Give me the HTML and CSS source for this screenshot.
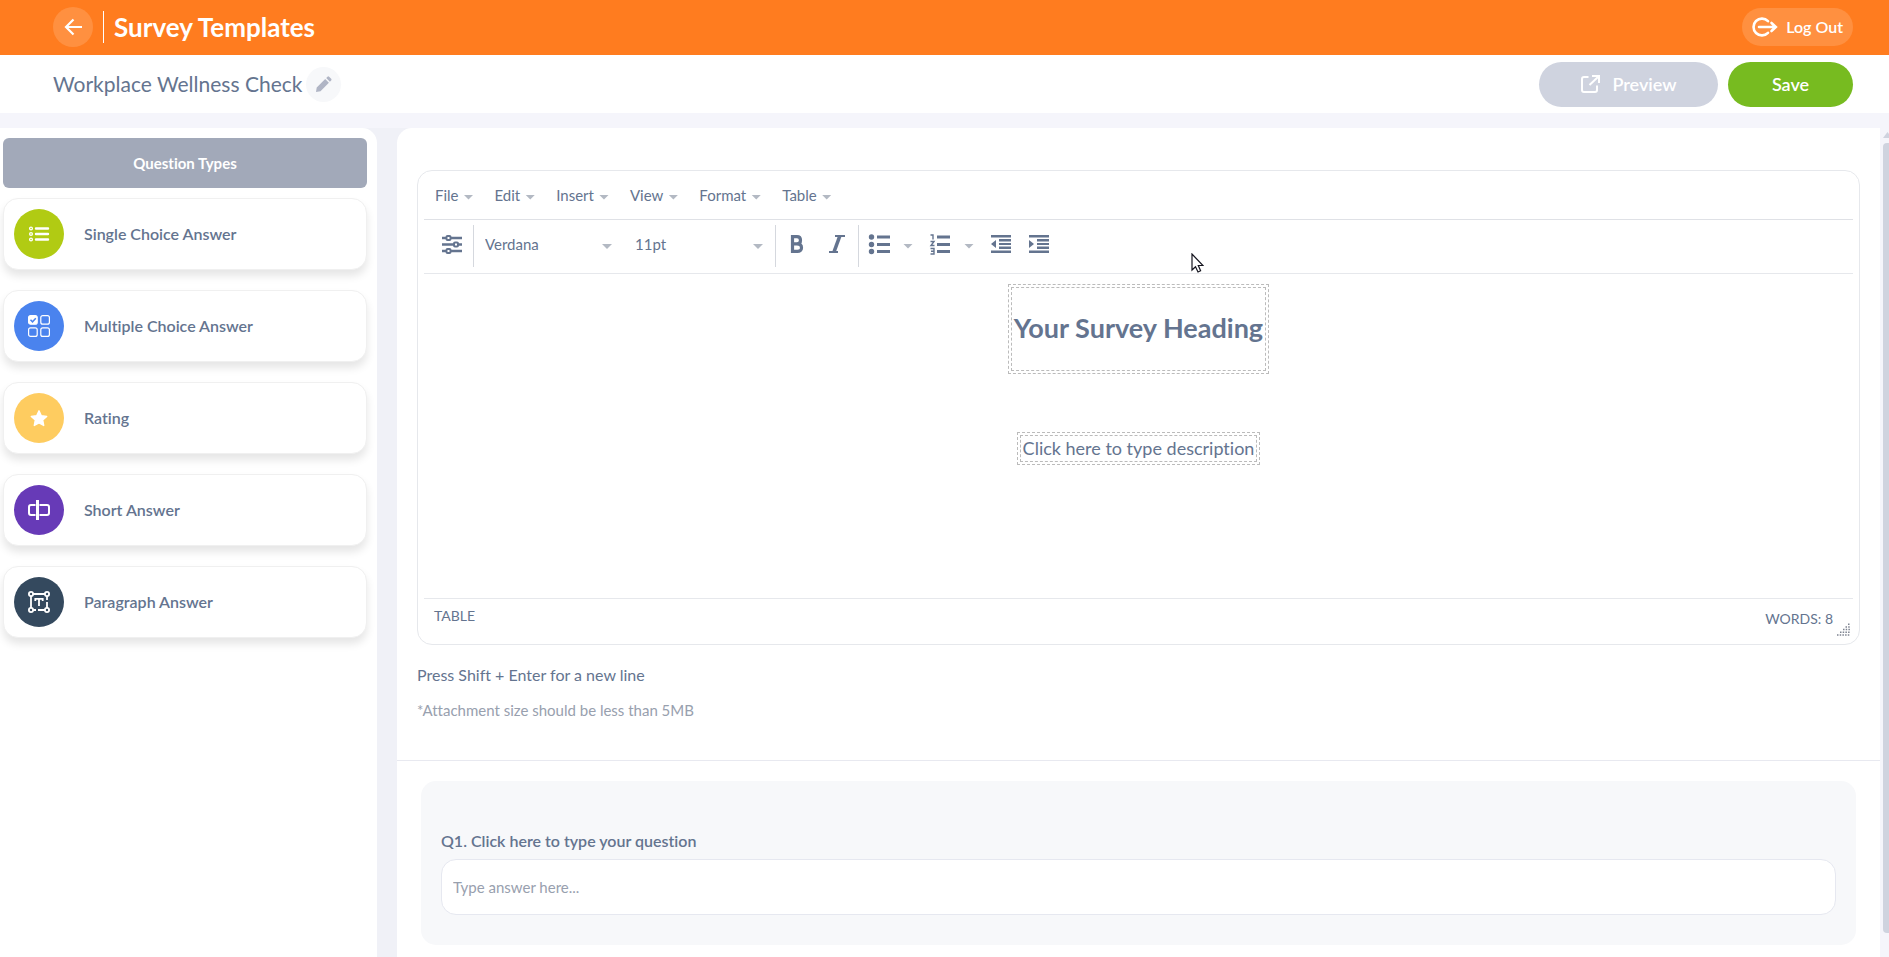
FILE: index.html
```html
<!DOCTYPE html>
<html lang="en">
<head>
<meta charset="utf-8">
<title>Survey Templates</title>
<link rel="stylesheet" href="styles.css">
</head>
<body>
<header class="topbar">
  <button class="back" aria-label="Back"><svg width="20" height="20" viewBox="0 0 20 20" fill="none" stroke="#fff" stroke-width="2.2"><path d="M19 10H3M10.5 2.5 3 10l7.500 7.500"/></svg></button>
  <h1 class="topbar-title">Survey Templates</h1>
  <button class="logout"><svg width="28" height="20" viewBox="0 0 28 20" fill="none" stroke="#fff" stroke-width="2.600" stroke-linecap="round"><path d="M18 4.200A8.400 8.400 0 1 0 18 15.800M9 10h16M21.500 6l4.300 4-4.300 4"/></svg>Log Out</button>
</header>
<div class="subbar">
  <h2 class="survey-name">Workplace Wellness Check</h2>
  <button class="edit" aria-label="Rename survey"><svg width="17" height="17" viewBox="0 0 17 17" fill="#b0b5c5"><path d="M1 16l.7-4.600L10.200 3l3.700 3.700L5.500 15.200zM11.200 2l1.300-1.300q.8-.7 1.600 0l2.100 2.100q.7.8 0 1.600L14.900 5.700z"/></svg></button>
  <button class="pill preview"><svg width="20" height="20" viewBox="0 0 20 20" fill="none" stroke="#fff" stroke-width="2"><path d="M8.500 3H4Q2 3 2 5v11q0 2 2 2h11q2 0 2-2v-4.500M12 2h7v7M18.500 2.500 9.500 11"/></svg>Preview</button>
  <button class="pill save">Save</button>
</div>
<div class="workspace">
  <aside class="sidebar">
    <h3 class="types-title">Question Types</h3>
    <ul class="types">
      <li><button class="type"><span class="disc lime"><svg width="22" height="18" viewBox="0 0 22 18" fill="none" stroke="#fff"><g stroke-width="1.300"><circle cx="3" cy="3.500" r="1.400"/><circle cx="3" cy="9" r="1.400"/><circle cx="3" cy="14.500" r="1.400"/></g><path stroke-width="2.400" stroke-linecap="round" d="M8 3.500h12M8 9h12M8 14.500h12"/></svg></span>Single Choice Answer</button></li>
      <li><button class="type"><span class="disc blue"><svg width="22" height="22" viewBox="0 0 22 22" fill="none" stroke="#fff" stroke-width="1.200"><rect x=".6" y=".6" width="8.600" height="8.600" rx="2" fill="#fff"/><rect x="12.800" y=".6" width="8.600" height="8.600" rx="2"/><rect x=".6" y="12.800" width="8.600" height="8.600" rx="2"/><rect x="12.800" y="12.800" width="8.600" height="8.600" rx="2"/><path stroke="#4a83ee" stroke-width="1.500" d="M2.500 4.800l2 2 3.300-3.500"/></svg></span>Multiple Choice Answer</button></li>
      <li><button class="type"><span class="disc amber"><svg width="20" height="20" viewBox="0 0 20 20" fill="#fff" stroke="#fff" stroke-width="1.400" stroke-linejoin="round"><path d="M10 2.800l2.300 4.900 5.400.7-4 3.700 1 5.400-4.700-2.600-4.700 2.600 1-5.400-4-3.700 5.400-.7z"/></svg></span>Rating</button></li>
      <li><button class="type"><span class="disc purple"><svg width="22" height="20" viewBox="0 0 22 20" fill="none" stroke="#fff"><path stroke-width="2" d="M7.500 5H3Q1 5 1 7v6q0 2 2 2h4.500M11.500 5H19q2 0 2 2v6q0 2-2 2h-7.500"/><path stroke-width="3" d="M9.500 0v20"/></svg></span>Short Answer</button></li>
      <li><button class="type"><span class="disc navy"><svg width="22" height="22" viewBox="0 0 22 22" fill="none" stroke="#fff" stroke-width="1.800"><circle cx="3" cy="3" r="2.100"/><circle cx="19" cy="3" r="2.100"/><circle cx="3" cy="19" r="2.100"/><circle cx="19" cy="19" r="2.100"/><path d="M5 3h12M3 5v12M19 5v4M19 11v6M5 19h3M10 19h7M7.300 10V7.800h7.400V10M11 8v7"/></svg></span>Paragraph Answer</button></li>
    </ul>
  </aside>
  <main class="main">
    <section class="intro">
      <div class="editor">
        <nav class="menus">
          <button class="menu">File<i class="caret"></i></button>
          <button class="menu">Edit<i class="caret"></i></button>
          <button class="menu">Insert<i class="caret"></i></button>
          <button class="menu">View<i class="caret"></i></button>
          <button class="menu">Format<i class="caret"></i></button>
          <button class="menu">Table<i class="caret"></i></button>
        </nav>
        <div class="tools">
          <button class="tool options" aria-label="Options"><svg width="22" height="20" viewBox="0 0 22 20" fill="#fff" stroke="#64748f" stroke-width="2"><path stroke-width="2.600" d="M1 4h20M1 10.500h20M1 17h20"/><rect x="5.500" y="2" width="4" height="4" rx="1"/><rect x="13" y="8.500" width="4" height="4" rx="1"/><rect x="5.500" y="15" width="4" height="4" rx="1"/></svg></button>
          <label class="picker"><select aria-label="Font"><option>Verdana</option></select><i class="caret"></i></label>
          <label class="picker size"><select aria-label="Font size"><option>11pt</option></select><i class="caret"></i></label>
          <div class="group styles">
            <button class="tool" aria-label="Bold"><svg width="16" height="20" viewBox="0 0 16 20" fill="none" stroke="#64748f" stroke-width="3.200"><path d="M3.500 2.600H8q3.500 0 3.500 3.600T8 9.800H3.500M8 9.800q4.500 0 4.500 3.900T8 17.400H3.500M3.500 1v18"/></svg></button>
            <button class="tool" aria-label="Italic"><svg width="16" height="20" viewBox="0 0 16 20" fill="none" stroke="#64748f"><path stroke-width="2" d="M6 2h10M0 18h9"/><path stroke-width="3.600" d="M10.800 2 5 18"/></svg></button>
          </div>
          <div class="group lists">
            <button class="tool" aria-label="Bullet list"><svg width="22" height="22" viewBox="0 0 22 22" fill="#64748f"><circle cx="3.500" cy="4" r="2.700"/><circle cx="3.500" cy="11.500" r="2.700"/><circle cx="3.500" cy="18.500" r="2.700"/><path d="M9 2.500h13v3H9zM9 10h13v3H9zM9 17h13v3H9z"/></svg><i class="caret"></i></button>
            <button class="tool" aria-label="Numbered list"><svg width="22" height="22" viewBox="0 0 22 22" fill="none" stroke="#64748f"><path stroke-width="2.900" d="M8 4h13M8 11.500h13M8 18.500h13"/><path stroke-width="1.400" d="M1.500 2H4v4.500M1.500 8.500H5l-3 4h3.500M1.500 15.500H5v5.500H1.500M2 18.200h3"/></svg><i class="caret"></i></button>
            <button class="tool" aria-label="Decrease indent"><svg width="22" height="20" viewBox="0 0 22 20" fill="#64748f"><path d="M1 1h20v2.500H1zM9 5h12v2.500H9zM9 9h12v2H9zM9 12.500h12V15H9zM1 16.500h20V19H1zM1 10l5-4v8z"/></svg></button>
            <button class="tool" aria-label="Increase indent"><svg width="22" height="20" viewBox="0 0 22 20" fill="#64748f"><path d="M1 1h20v2.500H1zM9 5h12v2.500H9zM9 9h12v2H9zM9 12.500h12V15H9zM1 16.500h20V19H1zM6 10 1 6v8z"/></svg></button>
          </div>
        </div>
        <div class="canvas" contenteditable="true">
          <div class="block"><h2 class="cell heading">Your Survey Heading</h2></div>
          <div class="block"><p class="cell desc">Click here to type description</p></div>
        </div>
        <div class="status"><span>TABLE</span><span class="words">WORDS: 8</span>
          <svg class="grip" width="13" height="13" viewBox="0 0 13 13" stroke="#7d8390" stroke-width="1.500" stroke-dasharray="1.500 1.200"><path d="M0 12h13M3 9.300h10M6 6.600h7M8.500 3.900H13M11 1.200h2"/></svg>
        </div>
      </div>
      <p class="hint">Press Shift + Enter for a new line</p>
      <p class="note">*Attachment size should be less than 5MB</p>
    </section>
    <section class="question">
      <label class="question-label" for="q1">Q1. Click here to type your question</label>
      <input class="answer" id="q1" type="text" placeholder="Type answer here...">
    </section>
  </main>
  <div class="scroll"><i class="scroll-up"></i><div class="thumb"></div></div>
</div>
<svg class="pointer" width="13" height="20" viewBox="0 0 13 20" fill="#fff" stroke="#15151f" stroke-width="1.200"><path d="M1 1v16l3.500-3.300L7 19l2.600-1.200L7.300 12.500H12z"/></svg>
</body>
</html>
```

FILE: styles.css
```css
* { box-sizing: border-box; }
body {
  margin: 0;
  height: 100vh;
  display: flex;
  flex-direction: column;
  overflow: hidden;
  font: 400 15px/20px Lato, "Noto Sans", sans-serif;
  font-variant-ligatures: none;
  color: #64748f;
  background: #f5f5fb;
}
h1, h2, h3, p, ul { margin: 0; padding: 0; list-style: none; }
button, select, input { font: inherit; font-variant-ligatures: none; color: inherit; border: 0; background: none; padding: 0; }
svg { display: block; flex: none; }

.topbar { display: flex; align-items: center; height: 55px; padding: 0 36px 1px 53px; background: #ff7c1f; color: #fff; flex: none; }
.back { width: 40px; height: 40px; border-radius: 50%; background: #ff9040; display: grid; place-items: center; }
.topbar-title { margin-left: 10px; padding-left: 10px; border-left: 1px solid #fff; font-size: 26px; line-height: 32px; font-weight: 700; }
.logout { margin-left: auto; height: 38px; padding: 0 10px 0 8px; border-radius: 19px; background: #ff9040; display: flex; align-items: center; gap: 8px; font-size: 16px; font-weight: 600; }

.subbar { display: flex; align-items: center; height: 58px; padding: 0 36px 0 53px; background: #fff; flex: none; }
.survey-name { font-size: 21px; line-height: 28px; font-weight: 400; }
.edit { width: 35px; height: 35px; margin-left: 4px; border-radius: 50%; background: #f7f8fa; display: grid; place-items: center; }
.pill { height: 45px; border-radius: 23px; color: #fff; font-size: 18px; font-weight: 600; display: flex; align-items: center; justify-content: center; gap: 12px; }
.preview { width: 179px; margin-left: auto; background: #cfd3df; }
.save { width: 125px; margin-left: 10px; background: #77bb20; }

.workspace { flex: 1; min-height: 0; margin-top: 15px; display: grid; grid-template-columns: 377px 1fr 9px; background: #f0f1f7; }
.sidebar { background: #fff; border-radius: 0 15px 0 0; padding: 10px 10px 0 3px; }
.types-title { height: 50px; line-height: 50px; text-align: center; border-radius: 6px; background: #a2a9b9; color: #fff; font-size: 15px; font-weight: 700; }
.types { display: grid; gap: 20px; margin-top: 10px; }
.type { width: 100%; height: 72px; padding: 0 10px; border: 1px solid #f0f0f0; border-radius: 15px; background: #fff; box-shadow: 0 6px 8px rgba(0, 0, 0, .1); display: flex; align-items: center; gap: 20px; font-size: 16px; font-weight: 600; }
.disc { width: 50px; height: 50px; border-radius: 50%; display: grid; place-items: center; }
.lime { background: #b1cb13; }
.blue { background: #4a83ee; }
.amber { background: #fecc60; }
.purple { background: #673ab7; }
.navy { background: #34495e; }

.main { margin-left: 20px; min-width: 0; background: #fff; border-radius: 15px 0 0 0; overflow: hidden; }
.intro { padding: 42px 20px 40px; border-bottom: 1px solid #e8e9f0; }
.editor { border: 1px solid #e6e8ec; border-radius: 15px; padding: 0 6px; }
.menus { height: 49px; padding: 0 11px; display: flex; align-items: center; gap: 21px; border-bottom: 1px solid #dfe1e6; }
.menu { display: flex; align-items: center; gap: 5px; }
.caret { flex: none; width: 10px; height: 5px; background: #b3b9c3; clip-path: polygon(0 0, 100% 0, 50% 100%); }
.menu .caret, .tool .caret { margin-top: 4px; }
.tools { height: 54px; padding: 5px 0 6px; display: flex; border-bottom: 1px solid #e6e8ec; }
.tool { display: flex; align-items: center; gap: 13px; }
.options { padding: 0 10px 4px 17px; border-right: 1px solid #d5d8de; }
.picker { position: relative; display: flex; width: 150px; }
.picker select { appearance: none; width: 100%; padding: 0 11px 5px; }
.picker .caret { position: absolute; right: 12px; top: 19px; }
.size { width: 151px; }
.group { display: flex; align-items: center; border-left: 1px solid #d5d8de; padding: 0 13px 4px; }
.styles { gap: 24px; }
.lists { gap: 16px; padding-left: 9px; }
.canvas { height: 324px; padding-top: 10px; display: flex; flex-direction: column; align-items: center; gap: 58px; outline: 0; }
.block { border: 1px dashed #bbb; padding: 2px; }
.cell { border: 1px dashed #bbb; padding: 2px; }
.heading { font-size: 27px; line-height: 32px; font-weight: 700; padding: 24px 2px 26px; }
.desc { font-size: 18px; line-height: 21px; }
.status { height: 46px; padding: 7px 3px 0 10px; border-top: 1px solid #e6e8ec; display: flex; font-size: 14px; }
.words { margin: 3px 4px 0 auto; }
.grip { margin-top: 17px; }
.hint { margin-top: 20px; font-size: 16px; }
.note { margin-top: 15px; color: #98a0ae; }
.question { margin: 20px 24px 0; padding: 50px 20px 30px; border-radius: 15px; background: #f7f8fa; }
.question-label { display: block; font-size: 16px; font-weight: 600; }
.answer { display: block; width: 100%; height: 56px; margin-top: 8px; padding: 0 11px; border: 1px solid #e6e8f0; border-radius: 15px; background: #fff; }
.answer::placeholder { color: #98a0ae; opacity: 1; }

.scroll { display: flex; flex-direction: column; padding: 4px 0 24px 3px; background: #f5f5fb; overflow: hidden; }
.scroll-up { width: 9px; height: 6px; flex: none; background: #cfd3df; clip-path: polygon(0 100%, 50% 0, 100% 100%); }
.thumb { flex: 1; margin-top: 5px; border-radius: 4px 0 0 4px; background: #cfd3df; }
.pointer { position: absolute; left: 1191px; top: 253px; }
```
